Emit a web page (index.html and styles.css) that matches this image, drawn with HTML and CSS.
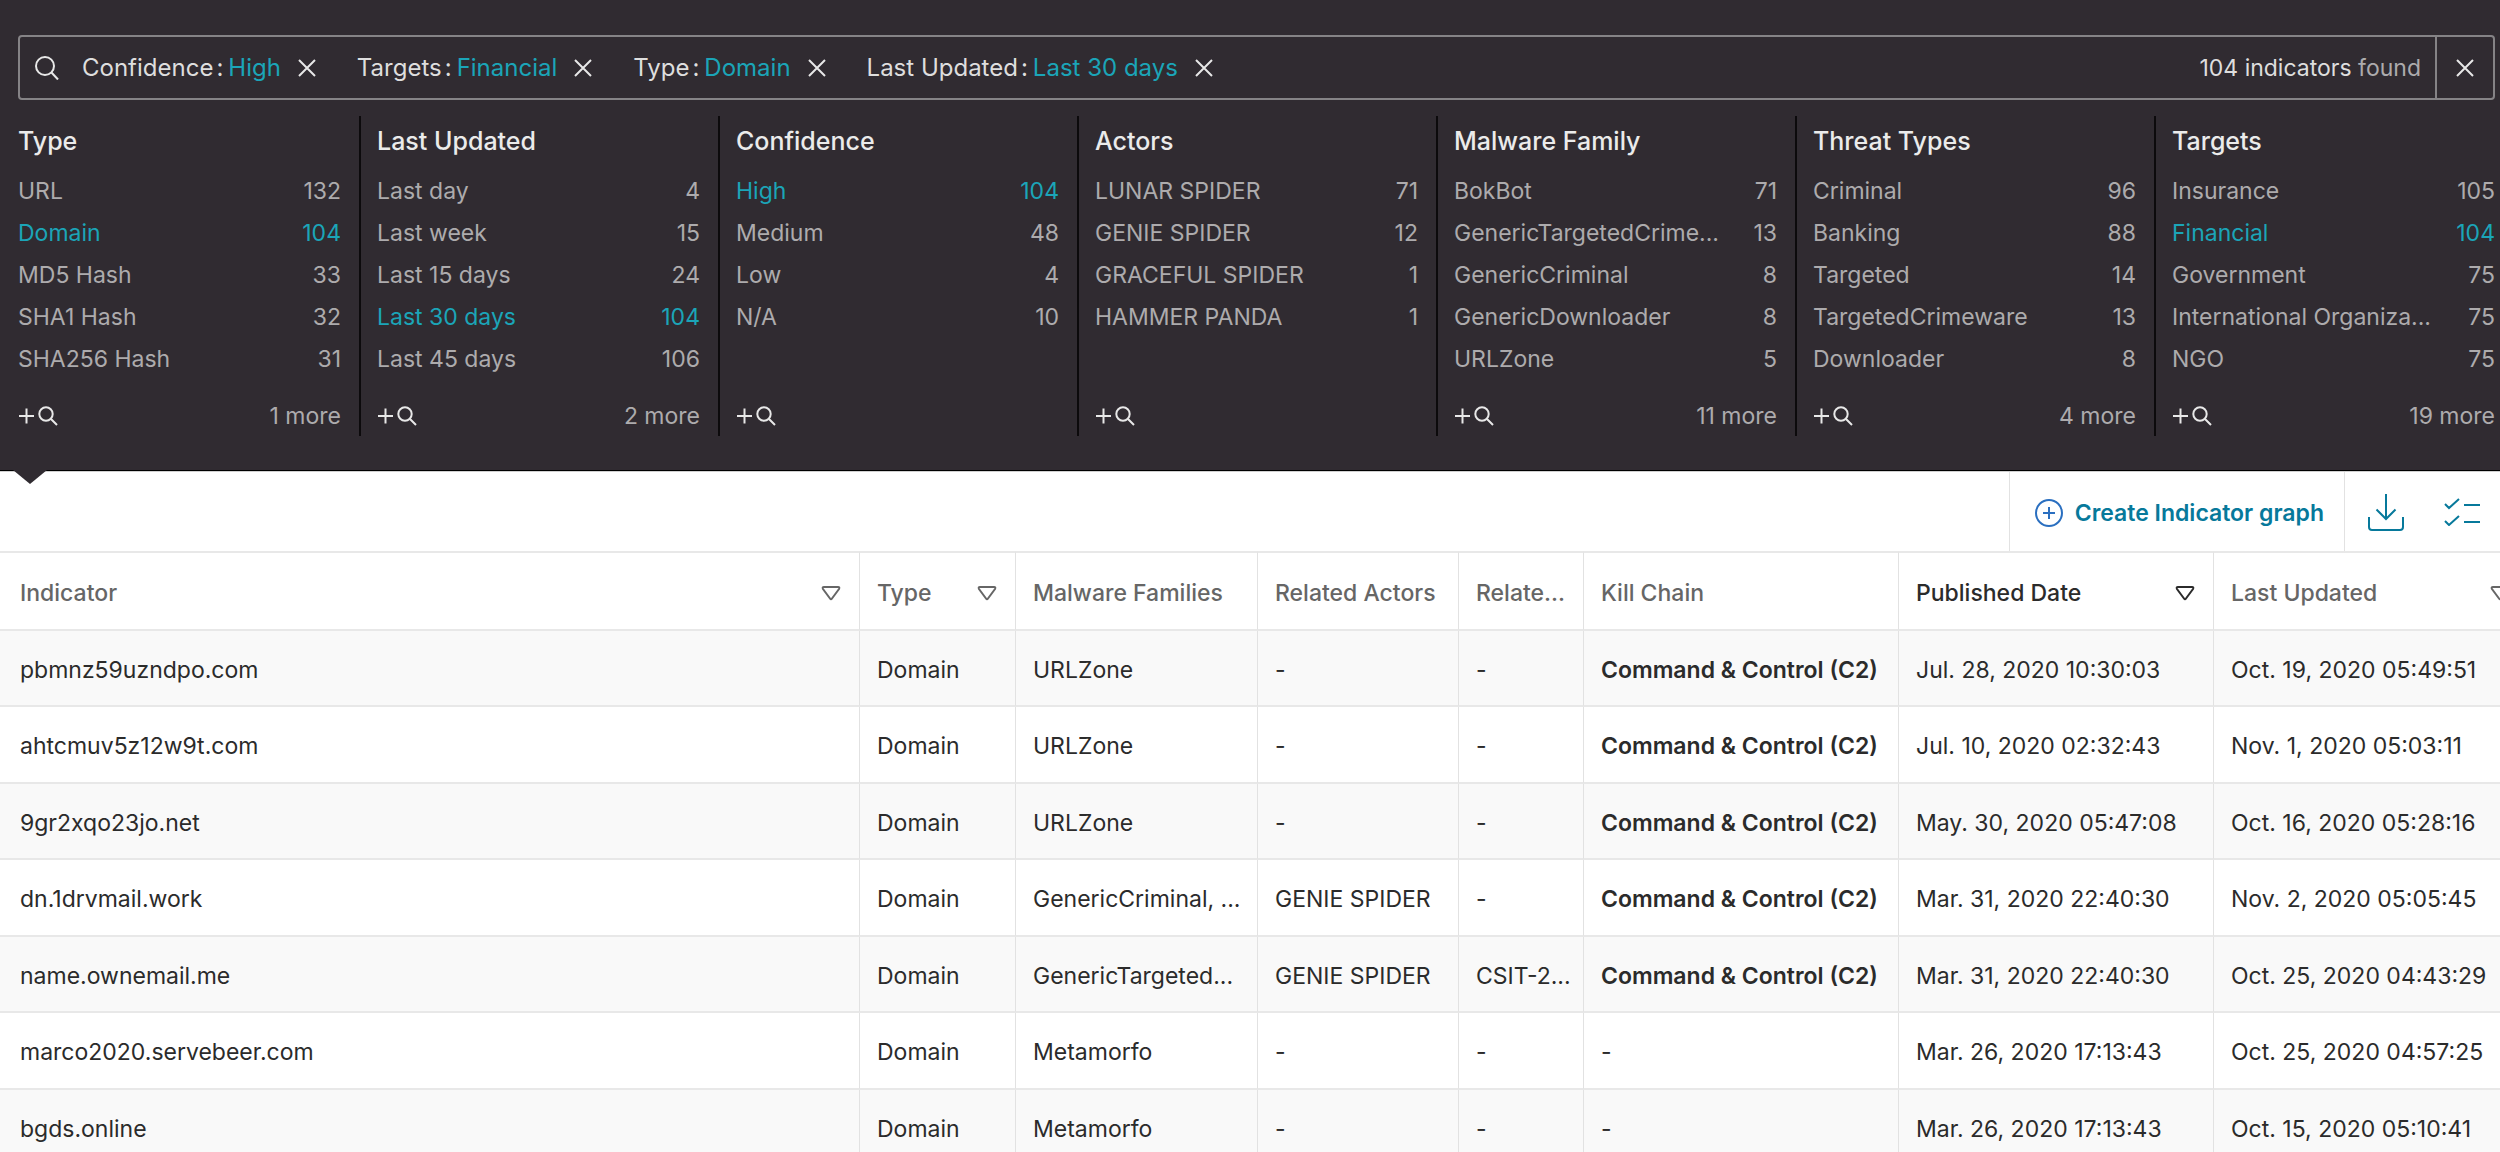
FILE: index.html
```html
<!DOCTYPE html>
<html lang="en">
<head>
<meta charset="utf-8">
<meta name="viewport" content="width=device-width, initial-scale=1">
<title>Indicators</title>
<link rel="stylesheet" href="styles.css">
</head>
<body>
<svg class="sprite" aria-hidden="true">
  <symbol id="i-x" viewBox="0 0 18 18"><path d="M1 1l16 16M17 1L1 17"/></symbol>
  <symbol id="i-search" viewBox="0 0 24 24"><circle cx="10" cy="10" r="9"/><path d="M16.500 16.500L23 23.500"/></symbol>
  <symbol id="i-addsearch" viewBox="0 0 40 20"><path d="M1 10h15M8.500 2.500v15M33 13L39 19"/><circle cx="28" cy="8" r="6.700"/></symbol>
  <symbol id="i-sort" viewBox="0 0 20 16"><path d="M3 2h14q2 0 1 2l-7 9.500q-1 1.500-2 0L2 4Q1 2 3 2z"/></symbol>
</svg>
<div class="page">
  <header class="panel">
    <div class="search">
      <svg class="icon search-icon"><use href="#i-search"/></svg>
      <ul class="chips">
        <li class="chip"><span>Confidence<i>:</i></span><b>High</b><button class="clear" aria-label="Remove Confidence"><svg class="icon x"><use href="#i-x"/></svg></button></li>
        <li class="chip"><span>Targets<i>:</i></span><b>Financial</b><button class="clear" aria-label="Remove Targets"><svg class="icon x"><use href="#i-x"/></svg></button></li>
        <li class="chip"><span>Type<i>:</i></span><b>Domain</b><button class="clear" aria-label="Remove Type"><svg class="icon x"><use href="#i-x"/></svg></button></li>
        <li class="chip"><span>Last Updated<i>:</i></span><b>Last 30 days</b><button class="clear" aria-label="Remove Last Updated"><svg class="icon x"><use href="#i-x"/></svg></button></li>
      </ul>
      <p class="found"><strong>104 indicators</strong> found</p>
      <button class="clear-all" aria-label="Clear all filters"><svg class="icon x"><use href="#i-x"/></svg></button>
    </div>
    <div class="facets">
      <section class="facet">
        <h2>Type</h2>
        <ul>
          <li><a href="#"><span>URL</span><em>132</em></a></li>
          <li><a href="#" class="on"><span>Domain</span><em>104</em></a></li>
          <li><a href="#"><span>MD5 Hash</span><em>33</em></a></li>
          <li><a href="#"><span>SHA1 Hash</span><em>32</em></a></li>
          <li><a href="#"><span>SHA256 Hash</span><em>31</em></a></li>
        </ul>
        <div class="foot"><button aria-label="Search Type"><svg class="icon add"><use href="#i-addsearch"/></svg></button><a href="#">1 more</a></div>
      </section>
      <section class="facet">
        <h2>Last Updated</h2>
        <ul>
          <li><a href="#"><span>Last day</span><em>4</em></a></li>
          <li><a href="#"><span>Last week</span><em>15</em></a></li>
          <li><a href="#"><span>Last 15 days</span><em>24</em></a></li>
          <li><a href="#" class="on"><span>Last 30 days</span><em>104</em></a></li>
          <li><a href="#"><span>Last 45 days</span><em>106</em></a></li>
        </ul>
        <div class="foot"><button aria-label="Search Last Updated"><svg class="icon add"><use href="#i-addsearch"/></svg></button><a href="#">2 more</a></div>
      </section>
      <section class="facet">
        <h2>Confidence</h2>
        <ul>
          <li><a href="#" class="on"><span>High</span><em>104</em></a></li>
          <li><a href="#"><span>Medium</span><em>48</em></a></li>
          <li><a href="#"><span>Low</span><em>4</em></a></li>
          <li><a href="#"><span>N/A</span><em>10</em></a></li>
        </ul>
        <div class="foot"><button aria-label="Search Confidence"><svg class="icon add"><use href="#i-addsearch"/></svg></button></div>
      </section>
      <section class="facet">
        <h2>Actors</h2>
        <ul>
          <li><a href="#"><span>LUNAR SPIDER</span><em>71</em></a></li>
          <li><a href="#"><span>GENIE SPIDER</span><em>12</em></a></li>
          <li><a href="#"><span>GRACEFUL SPIDER</span><em>1</em></a></li>
          <li><a href="#"><span>HAMMER PANDA</span><em>1</em></a></li>
        </ul>
        <div class="foot"><button aria-label="Search Actors"><svg class="icon add"><use href="#i-addsearch"/></svg></button></div>
      </section>
      <section class="facet">
        <h2>Malware Family</h2>
        <ul>
          <li><a href="#"><span>BokBot</span><em>71</em></a></li>
          <li><a href="#"><span>GenericTargetedCrime...</span><em>13</em></a></li>
          <li><a href="#"><span>GenericCriminal</span><em>8</em></a></li>
          <li><a href="#"><span>GenericDownloader</span><em>8</em></a></li>
          <li><a href="#"><span>URLZone</span><em>5</em></a></li>
        </ul>
        <div class="foot"><button aria-label="Search Malware Family"><svg class="icon add"><use href="#i-addsearch"/></svg></button><a href="#">11 more</a></div>
      </section>
      <section class="facet">
        <h2>Threat Types</h2>
        <ul>
          <li><a href="#"><span>Criminal</span><em>96</em></a></li>
          <li><a href="#"><span>Banking</span><em>88</em></a></li>
          <li><a href="#"><span>Targeted</span><em>14</em></a></li>
          <li><a href="#"><span>TargetedCrimeware</span><em>13</em></a></li>
          <li><a href="#"><span>Downloader</span><em>8</em></a></li>
        </ul>
        <div class="foot"><button aria-label="Search Threat Types"><svg class="icon add"><use href="#i-addsearch"/></svg></button><a href="#">4 more</a></div>
      </section>
      <section class="facet">
        <h2>Targets</h2>
        <ul>
          <li><a href="#"><span>Insurance</span><em>105</em></a></li>
          <li><a href="#" class="on"><span>Financial</span><em>104</em></a></li>
          <li><a href="#"><span>Government</span><em>75</em></a></li>
          <li><a href="#"><span>International Organiza...</span><em>75</em></a></li>
          <li><a href="#"><span>NGO</span><em>75</em></a></li>
        </ul>
        <div class="foot"><button aria-label="Search Targets"><svg class="icon add"><use href="#i-addsearch"/></svg></button><a href="#">19 more</a></div>
      </section>
    </div>
  </header>
  <div class="toolbar">
    <button class="create"><svg class="icon plus" viewBox="0 0 28 28"><circle cx="14" cy="14" r="13"/><path d="M8 14h12M14 8v12"/></svg>Create Indicator graph</button>
    <button class="tool" aria-label="Download"><svg class="icon download" viewBox="0 0 36 38"><path d="M18 1v25M8.500 16.500L18 26l9.500-9.500M1 24v10q0 3 3 3h28q3 0 3-3V24"/></svg></button>
    <button class="tool" aria-label="Select columns"><svg class="icon checks" viewBox="0 0 36 28"><path d="M1 6l4 4L15 1M1 23l4 4 10-9M20 7h16M20 24h16"/></svg></button>
  </div>
  <table class="grid">
    <colgroup><col><col class="c-type"><col class="c-family"><col class="c-actors"><col class="c-reports"><col class="c-date"><col class="c-date"><col class="c-date"></colgroup>
    <thead>
      <tr>
        <th><button>Indicator<svg class="icon sort"><use href="#i-sort"/></svg></button></th>
        <th><button>Type<svg class="icon sort"><use href="#i-sort"/></svg></button></th>
        <th>Malware Families</th>
        <th>Related Actors</th>
        <th>Relate...</th>
        <th>Kill Chain</th>
        <th class="sorted"><button>Published Date<svg class="icon sort"><use href="#i-sort"/></svg></button></th>
        <th><button>Last Updated<svg class="icon sort"><use href="#i-sort"/></svg></button></th>
      </tr>
    </thead>
    <tbody>
      <tr><td>pbmnz59uzndpo.com</td><td>Domain</td><td>URLZone</td><td>-</td><td>-</td><td class="kill">Command &amp; Control (C2)</td><td>Jul. 28, 2020 10:30:03</td><td>Oct. 19, 2020 05:49:51</td></tr>
      <tr><td>ahtcmuv5z12w9t.com</td><td>Domain</td><td>URLZone</td><td>-</td><td>-</td><td class="kill">Command &amp; Control (C2)</td><td>Jul. 10, 2020 02:32:43</td><td>Nov. 1, 2020 05:03:11</td></tr>
      <tr><td>9gr2xqo23jo.net</td><td>Domain</td><td>URLZone</td><td>-</td><td>-</td><td class="kill">Command &amp; Control (C2)</td><td>May. 30, 2020 05:47:08</td><td>Oct. 16, 2020 05:28:16</td></tr>
      <tr><td>dn.1drvmail.work</td><td>Domain</td><td>GenericCriminal, ...</td><td>GENIE SPIDER</td><td>-</td><td class="kill">Command &amp; Control (C2)</td><td>Mar. 31, 2020 22:40:30</td><td>Nov. 2, 2020 05:05:45</td></tr>
      <tr><td>name.ownemail.me</td><td>Domain</td><td>GenericTargeted...</td><td>GENIE SPIDER</td><td>CSIT-2...</td><td class="kill">Command &amp; Control (C2)</td><td>Mar. 31, 2020 22:40:30</td><td>Oct. 25, 2020 04:43:29</td></tr>
      <tr><td>marco2020.servebeer.com</td><td>Domain</td><td>Metamorfo</td><td>-</td><td>-</td><td>-</td><td>Mar. 26, 2020 17:13:43</td><td>Oct. 25, 2020 04:57:25</td></tr>
      <tr><td>bgds.online</td><td>Domain</td><td>Metamorfo</td><td>-</td><td>-</td><td>-</td><td>Mar. 26, 2020 17:13:43</td><td>Oct. 15, 2020 05:10:41</td></tr>
    </tbody>
  </table>
</div>
</body>
</html>
```
FILE: styles.css
```css
* { box-sizing: border-box; }
html, body { overflow: hidden; }
body {
  margin: 0;
  background: #fff;
  color: #2b2b2b;
  font: 400 23px/42px Inter, "Open Sans", sans-serif;
}
ul { list-style: none; margin: 0; padding: 0; }
h2, p { margin: 0; }
a { color: inherit; text-decoration: none; }
em, i { font-style: normal; }
button {
  margin: 0;
  padding: 0;
  border: 0;
  background: none;
  color: inherit;
  font: inherit;
  text-align: left;
  cursor: pointer;
}
.sprite { display: none; }
.icon {
  display: block;
  flex: none;
  fill: none;
  stroke: currentColor;
  stroke-width: 2;
}

/* The content runs a little past the right edge of the window */
.page { width: calc(100% + 13px); }

.panel {
  position: relative;
  padding: 35px 0 34px;
  border-bottom: 1px solid #000;
  background: #302b31;
  color: #adabad;
}
.panel::after {
  content: "";
  position: absolute;
  left: 13px;
  top: 100%;
  border: solid transparent;
  border-width: 14px 17px 0;
  border-top-color: #302b31;
}

.search {
  display: flex;
  align-items: center;
  height: 65px;
  margin: 0 18px;
  border: 2px solid #858386;
  border-radius: 4px;
}
.search-icon { width: 24px; height: 24px; margin: 0 23px 0 15px; color: #e8e8e8; }
.chips { display: flex; gap: 41px; flex: 1; font-size: 24px; }
.chip { display: flex; align-items: center; color: #dedede; }
.chip i { margin: 0 5px 0 3px; }
.chip b { font-weight: 400; color: #1ba5b8; }
.clear { margin-left: 17px; color: #e8e8e8; }
.x { width: 18px; height: 18px; }
.found { margin-right: 14px; }
.found strong { font-weight: 400; color: #dedede; }
.clear-all {
  display: flex;
  align-items: center;
  justify-content: center;
  align-self: stretch;
  width: 58px;
  border-left: 2px solid #858386;
  color: #e8e8e8;
}

.facets {
  display: grid;
  grid-template-columns: repeat(7, minmax(0, 1fr));
  margin-top: 16px;
}
.facet {
  display: flex;
  flex-direction: column;
  height: 320px;
  padding: 4px 18px 0 16px;
  border-left: 2px solid #0c0a0c;
}
.facet:first-child { border-left-color: transparent; }
.facet h2 {
  margin-bottom: 8px;
  color: #ebebeb;
  font-size: 25px;
  font-weight: 500;
  line-height: 42px;
}
.facet ul { flex: 1; }
.facet li a { display: flex; justify-content: space-between; white-space: nowrap; }
.on { color: #1ba5b8; }
.foot { display: flex; justify-content: space-between; align-items: center; height: 40px; }
.foot button { color: #e8e8e8; }
.add { width: 40px; height: 20px; }

.toolbar {
  display: flex;
  justify-content: flex-end;
  height: 80px;
  padding-right: 13px;
  border-top: 1px solid #d0d0d0;
  color: #07799b;
}
.create {
  display: flex;
  align-items: center;
  gap: 12px;
  margin-right: 3px;
  padding: 3px 20px 0 25px;
  border: solid #e2e2e2;
  border-width: 0 1px;
  font-weight: 600;
}
.plus { width: 28px; height: 28px; color: #2a6fc0; }
.tool { display: flex; align-items: center; justify-content: center; width: 76px; }
.download { width: 36px; height: 38px; }
.checks { width: 36px; height: 28px; }

.grid {
  width: calc(100% + 16px);
  border-collapse: separate;
  border-spacing: 0;
  table-layout: fixed;
  line-height: 30px;
}
.c-type { width: 156px; }
.c-family { width: 242px; }
.c-actors { width: 201px; }
.c-reports { width: 125px; }
.c-date { width: 315px; }
th, td {
  padding: 3px 0 0 17px;
  border-right: 1px solid #e2e2e2;
  border-bottom: 2px solid #e8e8e8;
  text-align: left;
  white-space: nowrap;
}
th:first-child, td:first-child { padding-left: 20px; }
th {
  height: 80px;
  border-top: 2px solid #e8e8e8;
  color: #666;
  font-weight: 500;
}
th button { display: flex; justify-content: space-between; align-items: center; width: 100%; padding-right: 18px; }
.sort { width: 20px; height: 16px; }
.sorted { color: #2b2b2b; }
td { height: 76px; }
tbody tr:nth-child(even) td { height: 77px; }
tbody tr:nth-child(odd) { background: #f9f9f9; }
.kill { font-weight: 600; }
```
